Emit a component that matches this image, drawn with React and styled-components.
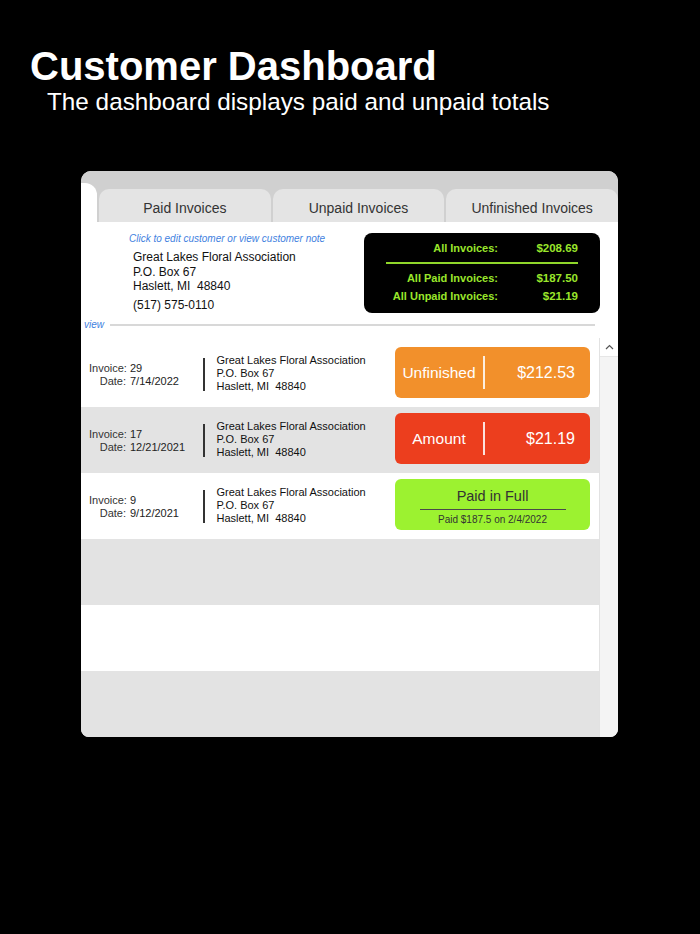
import React from "react";
import styled, { createGlobalStyle } from "styled-components";

const invoices = [
  { no: 29, date: "7/14/2022", kind: "unfinished", label: "Unfinished", amount: "$212.53" },
  { no: 17, date: "12/21/2021", kind: "amount", label: "Amount", amount: "$21.19" },
  { no: 9, date: "9/12/2021", kind: "paid", note: "Paid $187.5 on 2/4/2022" },
];

const tabs = ["Paid Invoices", "Unpaid Invoices", "Unfinished Invoices"];

function StatusButton({ inv }) {
  if (inv.kind === "paid") {
    return (
      <PaidButton>
        <PaidTitle>Paid in Full</PaidTitle>
        <PaidNote>{inv.note}</PaidNote>
      </PaidButton>
    );
  }
  return (
    <AmountButton kind={inv.kind}>
      <ButtonLabel>{inv.label}</ButtonLabel>
      <ButtonDivider />
      <ButtonValue>{inv.amount}</ButtonValue>
    </AmountButton>
  );
}

function App() {
  const rows = [...invoices, null, null, null];
  return (
    <>
      <GlobalStyle />
      <Page>
        <Title>Customer Dashboard</Title>
        <Subtitle>The dashboard displays paid and unpaid totals</Subtitle>

        <Panel>
          <TabBar>
            <TabStub />
            {tabs.map((t) => (
              <Tab key={t}>{t}</Tab>
            ))}
          </TabBar>

          <Header>
            <HeaderTop>
              <Customer>
                <EditNote>Click to edit customer or view customer note</EditNote>
                <Address>
                  <div>Great Lakes Floral Association</div>
                  <div>P.O. Box 67</div>
                  <div>Haslett, MI&nbsp; 48840</div>
                </Address>
                <Phone>(517) 575-0110</Phone>
              </Customer>

              <Totals>
                <TotalRow>
                  <span>All Invoices:</span>
                  <span>$208.69</span>
                </TotalRow>
                <TotalLine />
                <TotalRow>
                  <span>All Paid Invoices:</span>
                  <span>$187.50</span>
                </TotalRow>
                <TotalRow tight>
                  <span>All Unpaid Invoices:</span>
                  <span>$21.19</span>
                </TotalRow>
              </Totals>
            </HeaderTop>

            <ViewRow>
              <ViewLink>view</ViewLink>
              <ViewLine />
            </ViewRow>
          </Header>

          <ListArea>
            <Rows>
              {rows.map((inv, i) => (
                <Row key={i} striped={i % 2 === 1}>
                  {inv && (
                    <>
                      <InvoiceInfo>
                        <Label>Invoice:</Label>
                        <span>{inv.no}</span>
                        <Label>Date:</Label>
                        <span>{inv.date}</span>
                      </InvoiceInfo>
                      <RowDivider />
                      <RowAddress>
                        <div>Great Lakes Floral Association</div>
                        <div>P.O. Box 67</div>
                        <div>Haslett, MI&nbsp; 48840</div>
                      </RowAddress>
                      <StatusButton inv={inv} />
                    </>
                  )}
                </Row>
              ))}
            </Rows>
            <Scrollbar>
              <ScrollUp>
                <svg width="9" height="6" viewBox="0 0 9 6">
                  <path d="M1 5 L4.5 1.5 L8 5" fill="none" stroke="#555" strokeWidth="1.2" />
                </svg>
              </ScrollUp>
            </Scrollbar>
          </ListArea>
        </Panel>
      </Page>
    </>
  );
}

////////////////////////////////////////////Styled-Components
const GlobalStyle = createGlobalStyle`
  html, body {
    margin: 0;
    padding: 0;
    background: #000;
  }
  body {
    font-family: "Liberation Sans", Arial, Helvetica, sans-serif;
  }
`;

const Page = styled.div`
  width: 700px;
  height: 934px;
  background: #000;
  padding-top: 44px;
  box-sizing: border-box;
`;

const Title = styled.h1`
  margin: 0 0 0 30px;
  font-size: 40px;
  line-height: 44px;
  font-weight: bold;
  color: #fff;
`;

const Subtitle = styled.p`
  margin: 0 0 0 47px;
  font-size: 24.3px;
  line-height: 28px;
  color: #fff;
`;

const Panel = styled.div`
  margin: 55px 0 0 81px;
  width: 537px;
  height: 566px;
  border-radius: 10px 10px 8px 8px;
  overflow: hidden;
  background: #fff;
  display: flex;
  flex-direction: column;
`;

const TabBar = styled.div`
  height: 51px;
  flex: none;
  background: #d0d0d0;
  display: flex;
  align-items: flex-end;
  gap: 2px;
`;

const TabStub = styled.div`
  width: 16px;
  height: 39px;
  background: #fff;
  border-top-right-radius: 12px;
  flex: none;
`;

const Tab = styled.div`
  flex: 1;
  height: 33px;
  background: #e4e4e4;
  border-radius: 10px 10px 0 0;
  display: flex;
  align-items: center;
  justify-content: center;
  font-size: 14px;
  color: #333;
  padding-top: 4px;
  box-sizing: border-box;
`;

const Header = styled.div`
  height: 119px;
  flex: none;
  padding-top: 11px;
  box-sizing: border-box;
`;

const HeaderTop = styled.div`
  display: flex;
  justify-content: space-between;
  align-items: flex-start;
`;

const Customer = styled.div`
  margin-left: 48px;
`;

const EditNote = styled.div`
  font-size: 10px;
  line-height: 12px;
  font-style: italic;
  color: #3f7fe0;
`;

const Address = styled.div`
  margin: 5px 0 0 4px;
  font-size: 12px;
  line-height: 14.5px;
  color: #111;
`;

const Phone = styled.div`
  margin: 4px 0 0 4px;
  font-size: 12px;
  line-height: 14px;
  color: #111;
`;

const Totals = styled.div`
  width: 236px;
  height: 80px;
  margin-right: 18px;
  box-sizing: border-box;
  background: #000;
  border-radius: 8px;
  padding: 8px 22px 0 22px;
`;

const TotalRow = styled.div`
  display: grid;
  grid-template-columns: 1fr 80px;
  align-items: baseline;
  line-height: 14px;
  font-weight: bold;
  color: #9ae62b;
  margin-top: ${(p) => (p.tight ? "4px" : "0")};

  span {
    text-align: right;
    font-size: 11.5px;
  }
  span:first-child {
    font-size: 11px;
  }
`;

const TotalLine = styled.div`
  height: 1.5px;
  background: #8fd62a;
  margin: 7px 0 7px 0;
`;

const ViewRow = styled.div`
  display: flex;
  align-items: center;
  margin-top: 6px;
  padding-right: 23px;
`;

const ViewLink = styled.span`
  font-size: 10px;
  line-height: 12px;
  font-style: italic;
  color: #3f7fe0;
  padding-left: 3px;
`;

const ViewLine = styled.div`
  flex: 1;
  height: 2px;
  background: #d8d8d8;
  margin-left: 6px;
`;

const ListArea = styled.div`
  flex: 1;
  display: flex;
  min-height: 0;
`;

const Rows = styled.div`
  flex: 1;
  display: flex;
  flex-direction: column;
`;

const Row = styled.div`
  height: 66px;
  flex: none;
  background: ${(p) => (p.striped ? "#e3e3e3" : "#fff")};
  display: flex;
  align-items: center;
  padding: 0 9px 0 8px;
  box-sizing: border-box;
`;

const InvoiceInfo = styled.div`
  width: 114px;
  flex: none;
  display: grid;
  grid-template-columns: 37px auto;
  column-gap: 4px;
  font-size: 11px;
  line-height: 13px;
  color: #222;
  margin-top: 1px;
`;

const Label = styled.span`
  text-align: right;
  color: #333;
`;

const RowDivider = styled.div`
  width: 1.5px;
  height: 33px;
  background: #333;
  flex: none;
`;

const RowAddress = styled.div`
  flex: 1;
  margin-left: 12px;
  font-size: 11px;
  line-height: 13px;
  color: #111;
  margin-top: -2px;
`;

const buttonColors = {
  unfinished: "#f2902b",
  amount: "#ec3e1e",
};

const AmountButton = styled.div`
  width: 195px;
  height: 51px;
  flex: none;
  border-radius: 6px;
  background: ${(p) => buttonColors[p.kind]};
  display: flex;
  align-items: center;
  color: #fff;
  margin-top: -3px;
`;

const ButtonLabel = styled.span`
  width: 88px;
  text-align: center;
  font-size: 15.5px;
`;

const ButtonDivider = styled.div`
  width: 1.5px;
  height: 33px;
  background: rgba(255, 255, 255, 0.85);
`;

const ButtonValue = styled.span`
  flex: 1;
  text-align: right;
  padding-right: 15px;
  font-size: 16px;
`;

const PaidButton = styled.div`
  width: 195px;
  height: 51px;
  flex: none;
  border-radius: 6px;
  background: #9cf230;
  display: flex;
  flex-direction: column;
  align-items: center;
  color: #333;
  margin-top: -3px;
  box-sizing: border-box;
  padding-top: 9px;
`;

const PaidTitle = styled.div`
  width: 146px;
  text-align: center;
  font-size: 14.5px;
  line-height: 17px;
  padding-bottom: 4px;
  border-bottom: 1.5px solid #4a4a4a;
`;

const PaidNote = styled.div`
  font-size: 10px;
  line-height: 12px;
  margin-top: 4px;
`;

const Scrollbar = styled.div`
  width: 19px;
  flex: none;
  background: #f4f4f4;
  border-left: 1px solid #e2e2e2;
  box-sizing: border-box;
  margin-top: -3px;
`;

const ScrollUp = styled.div`
  height: 18px;
  background: #fff;
  border-bottom: 1px solid #e6e6e6;
  display: flex;
  align-items: center;
  justify-content: center;
`;

export default App;
